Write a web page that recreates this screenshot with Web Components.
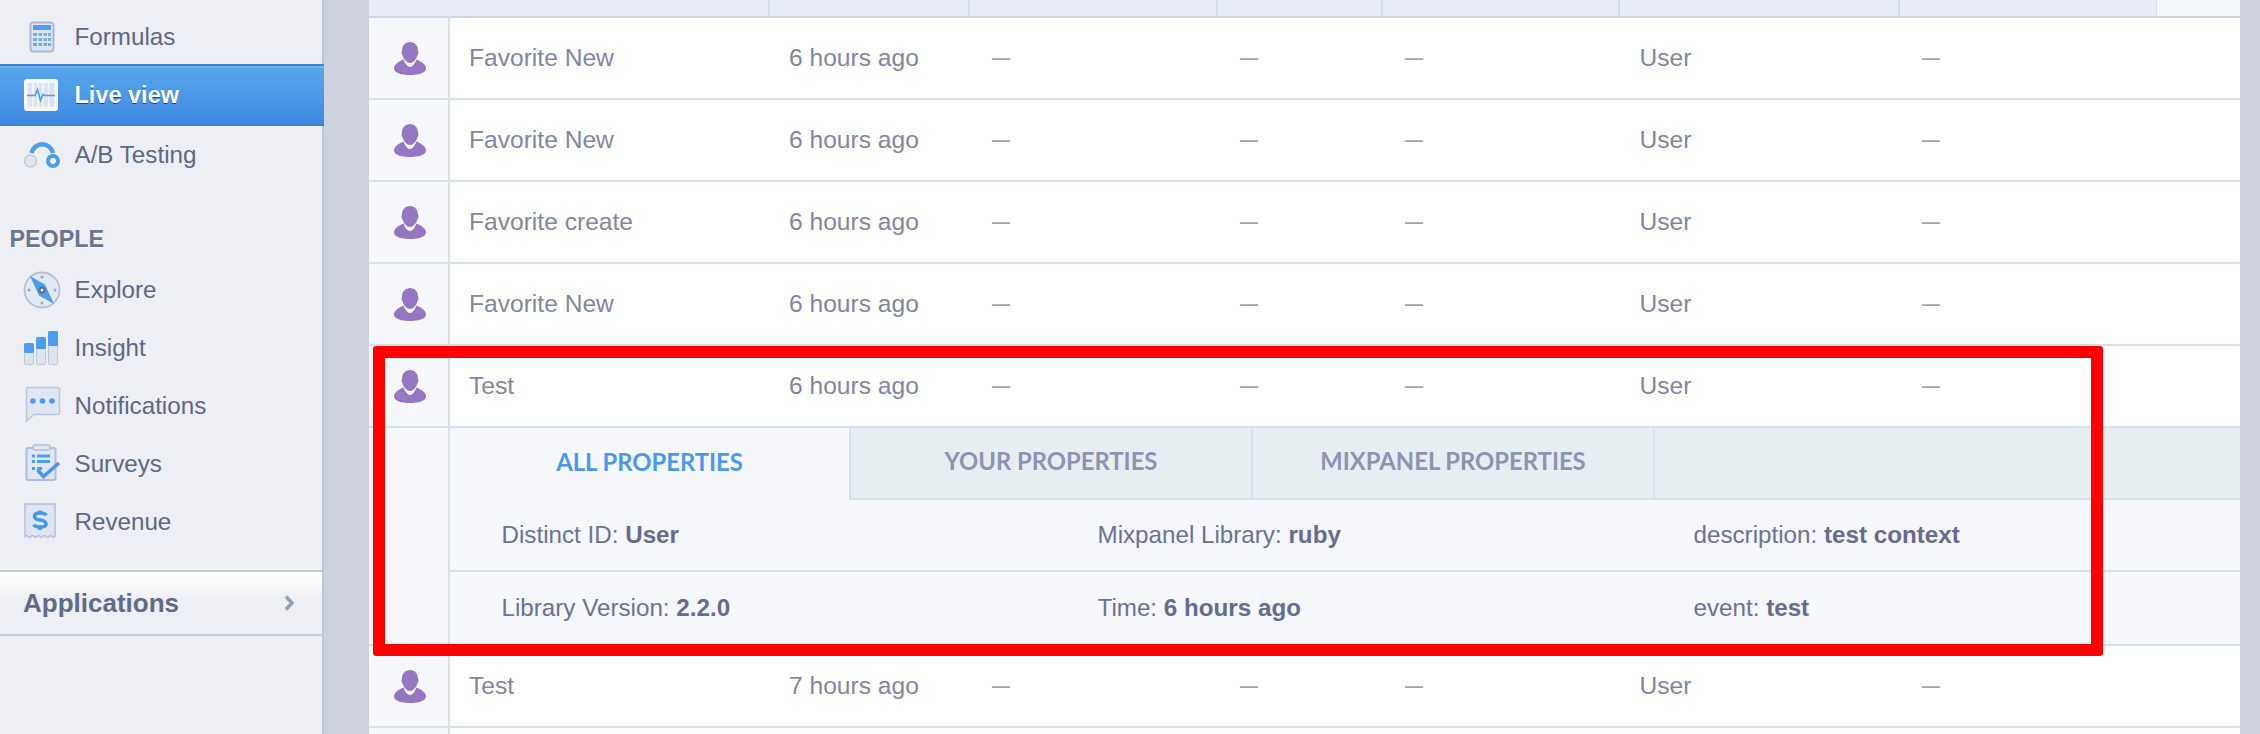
<!DOCTYPE html>
<html>
<head>
<meta charset="utf-8">
<title>Live view</title>
<style>
  html, body { margin: 0; height: 734px; overflow: hidden; background: #cdd2de; }
  body {
    font-family: "Liberation Sans", Arial, sans-serif;
    --cols: 81px 319px 200px 248px 165px 237px 280px 258px 83px;
  }
</style>
</head>
<body>
<app-shell>
  <side-nav slot="nav">
    <nav-item icon="formulas" first>Formulas</nav-item>
    <nav-item icon="live" active>Live view</nav-item>
    <nav-item icon="ab">A/B Testing</nav-item>
    <nav-heading>PEOPLE</nav-heading>
    <nav-item icon="explore">Explore</nav-item>
    <nav-item icon="insight">Insight</nav-item>
    <nav-item icon="notifications">Notifications</nav-item>
    <nav-item icon="surveys">Surveys</nav-item>
    <nav-item icon="revenue">Revenue</nav-item>
    <nav-section>Applications</nav-section>
  </side-nav>

  <event-table>
    <table-head></table-head>
    <event-row name="Favorite New" time="6 hours ago" type="User"></event-row>
    <event-row name="Favorite New" time="6 hours ago" type="User"></event-row>
    <event-row name="Favorite create" time="6 hours ago" type="User"></event-row>
    <event-row name="Favorite New" time="6 hours ago" type="User"></event-row>
    <event-row name="Test" time="6 hours ago" type="User"></event-row>
    <event-props>
      <prop-tab slot="tabs" active>ALL PROPERTIES</prop-tab>
      <prop-tab slot="tabs">YOUR PROPERTIES</prop-tab>
      <prop-tab slot="tabs">MIXPANEL PROPERTIES</prop-tab>
      <prop-item label="Distinct ID">User</prop-item>
      <prop-item label="Mixpanel Library">ruby</prop-item>
      <prop-item label="description">test context</prop-item>
      <prop-item label="Library Version" last>2.2.0</prop-item>
      <prop-item label="Time" last>6 hours ago</prop-item>
      <prop-item label="event" last>test</prop-item>
    </event-props>
    <event-row name="Test" time="7 hours ago" type="User"></event-row>
    <event-row stub></event-row>
    <red-highlight></red-highlight>
  </event-table>
</app-shell>

<script>
const ICONS = {
  formulas: `
    <rect x="8.5" y="5.5" width="23" height="29" rx="3" fill="#dde5f2" stroke="#adb9d2" stroke-width="2"/>
    <rect x="11" y="8" width="18" height="5" fill="#4d9cee"/>
    <g fill="#6fadee">
      <rect x="11" y="16" width="4" height="3"/><rect x="16.5" y="16" width="3.5" height="3"/><rect x="21.5" y="16" width="3.5" height="3"/><rect x="26" y="16" width="3" height="3"/>
      <rect x="11" y="21" width="4" height="3"/><rect x="16.5" y="21" width="3.5" height="3"/><rect x="21.5" y="21" width="3.5" height="3"/><rect x="26" y="21" width="3" height="3"/>
      <rect x="11" y="26" width="4" height="3"/><rect x="16.5" y="26" width="3.5" height="3"/><rect x="21.5" y="26" width="3.5" height="3"/><rect x="26" y="26" width="3" height="3"/>
    </g>`,
  live: `
    <rect x="2" y="3" width="34" height="32" rx="3" fill="#f6f8fc"/>
    <rect x="5.500" y="7" width="27" height="24" fill="#dbe3ee"/>
    <path d="M11 7v24M16 7v24M21 7v24M26.500 7v24" stroke="#f6f8fc" stroke-width="1.500"/>
    <path d="M5 19.500h8l2.500-6 3 11 2.500-6 1.500 1H33" fill="none" stroke="#4d9cee" stroke-width="1.600"/>`,
  ab: `
    <path d="M9.500 18A11 11 0 0 1 31 18" fill="none" stroke="#4d9cee" stroke-width="4.500"/>
    <circle cx="8.500" cy="26" r="6" fill="#e2e5eb" stroke="#c3cad7" stroke-width="1.500"/>
    <circle cx="31" cy="26" r="5" fill="#f1f5fa" stroke="#4d9cee" stroke-width="4"/>`,
  explore: `
    <circle cx="20" cy="20" r="17.500" fill="#e3e9f3" stroke="#b5c1d9" stroke-width="1.800"/>
    <g fill="#9aa8c0"><circle cx="20" cy="7" r="1.500"/><circle cx="20" cy="33" r="1.500"/><circle cx="7" cy="20" r="1.500"/><circle cx="33" cy="20" r="1.500"/></g>
    <path d="M8 6l15 8.500L32 34 17 25.500z" fill="#4d9cee"/>
    <circle cx="20" cy="20" r="3.500" fill="#5c6c8c"/><circle cx="20" cy="20" r="1.500" fill="#dfe6f2"/>`,
  insight: `
    <g fill="#dfe5ef" stroke="#bcc7da" stroke-width="1">
      <rect x="2.500" y="15.500" width="9" height="21" rx="1.500"/><rect x="14.500" y="9.500" width="9" height="27" rx="1.500"/><rect x="26.500" y="3.500" width="9" height="33" rx="1.500"/>
    </g>
    <g fill="#4d9cee"><rect x="2" y="15" width="10" height="10" rx="1.500"/><rect x="14" y="9" width="10" height="12" rx="1.500"/><rect x="26" y="3" width="10" height="15" rx="1.500"/></g>`,
  notifications: `
    <path d="M6.500 1.500h29a2 2 0 0 1 2 2v23a2 2 0 0 1-2 2H12L4.500 35V3.500a2 2 0 0 1 2-2z" fill="#e1e7f2" stroke="#bcc7da" stroke-width="1.500"/>
    <g fill="#4d9cee"><circle cx="11" cy="15" r="2.800"/><circle cx="20.500" cy="15" r="2.800"/><circle cx="30" cy="15" r="2.800"/></g>`,
  surveys: `
    <rect x="4.500" y="4" width="29" height="32" rx="2" fill="#e1e7f2" stroke="#b2bed6" stroke-width="2"/>
    <rect x="11" y="1" width="17" height="5" rx="2" fill="#e1e7f2" stroke="#b2bed6" stroke-width="1.500"/>
    <g fill="#4d9cee">
      <rect x="10" y="10.500" width="3" height="3"/><rect x="15" y="10.500" width="13" height="3"/>
      <rect x="10" y="16" width="3" height="3"/><rect x="15" y="16" width="13" height="3"/>
      <rect x="10" y="23" width="3" height="3"/><rect x="15" y="23" width="5" height="3"/>
    </g>
    <path d="M15.500 26l6 6.500L37 19" fill="none" stroke="#4398ea" stroke-width="3.500"/>`,
  revenue: `
    <path d="M3 2h30v32.500q-1.500 2-3 0t-3 0-3 0-3 0-3 0-3 0-3 0-3 0-3 0-3 0z" fill="#dfe6f2" stroke="#b5c1d9" stroke-width="1.500"/>
    <path d="M24 13.500q-.8-2.500-6-2.500-5.500 0-5.500 3.200t5.500 3.800 6 3.800-6 3.200q-5.200 0-6-2.500M18 8.500v3M18 25v3" fill="none" stroke="#4398ea" stroke-width="3.500"/>`
};

class AppShell extends HTMLElement {
  constructor() {
    super();
    this.attachShadow({ mode: "open" });
    this.shadowRoot.innerHTML = `
      <style>
        :host { display: flex; height: 734px; overflow: hidden; background: #cdd2de; }
        .main { flex: 1; min-width: 0; padding: 0 20px 0 45px; }
      </style>
      <slot name="nav"></slot>
      <div class="main"><slot></slot></div>
    `;
  }
}

class SideNav extends HTMLElement {
  constructor() {
    super();
    this.attachShadow({ mode: "open" });
    this.shadowRoot.innerHTML = `
      <style>
        :host {
          display: block;
          box-sizing: border-box;
          flex: 0 0 324px;
          background: #edeff4;
          border-right: 2px solid #b9c8d8;
        }
      </style>
      <slot></slot>
    `;
  }
}

class NavItem extends HTMLElement {
  constructor() {
    super();
    this.attachShadow({ mode: "open" });
    this.shadowRoot.innerHTML = `
      <style>
        :host {
          display: flex;
          align-items: center;
          box-sizing: border-box;
          height: 58px;
          padding-left: 22px;
          color: #5e6882;
          font-size: 24.2px;
        }
        :host([first]) { height: 64px; padding-top: 10px; }
        :host([active]) {
          height: 62px;
          margin-right: -2px;
          padding-top: 1px;
          position: relative;
          color: #fff;
          font-size: 23.5px;
          font-weight: bold;
          text-shadow: 0 1px 0 #1746b8;
          background: linear-gradient(#59a7eb, #3f88e0);
          border-top: 2px solid #3b84d8;
          border-bottom: 2px solid #3a7fd4;
          box-shadow: inset 0 2px 0 #74b4ef;
        }
        svg { width: 40px; height: 40px; margin-right: 12.500px; flex: none; filter: blur(.4px); }
      </style>
      <svg viewBox="0 0 40 40">${ICONS[this.getAttribute("icon")] || ""}</svg>
      <slot></slot>
    `;
  }
}

class NavHeading extends HTMLElement {
  constructor() {
    super();
    this.attachShadow({ mode: "open" });
    this.shadowRoot.innerHTML = `
      <style>
        :host {
          display: flex;
          align-items: flex-end;
          box-sizing: border-box;
          height: 77px;
          padding: 0 0 8.500px 9.500px;
          color: #6b7490;
          font-size: 23.3px;
          font-weight: bold;
          text-shadow: 0 1px 0 #fff;
        }
      </style>
      <slot></slot>
    `;
  }
}

class NavSection extends HTMLElement {
  constructor() {
    super();
    this.attachShadow({ mode: "open" });
    this.shadowRoot.innerHTML = `
      <style>
        :host {
          display: flex;
          align-items: center;
          justify-content: space-between;
          box-sizing: border-box;
          height: 66px;
          margin-top: 19px;
          padding: 0 28px 0 23px;
          color: #626b85;
          font-size: 26px;
          font-weight: bold;
          background: linear-gradient(#fff 0, #fafbfc 13px, #edeff4 26px);
          border-top: 2px solid #bcd0de;
          border-bottom: 2px solid #bcd0de;
        }
        svg { width: 10px; height: 16px; }
      </style>
      <slot></slot>
      <svg viewBox="0 0 10 16"><path d="M2 1.500L8 8l-6 6.500" fill="none" stroke="#8fa3b5" stroke-width="3.500"/></svg>
    `;
  }
}

class EventTable extends HTMLElement {
  constructor() {
    super();
    this.attachShadow({ mode: "open" });
    this.shadowRoot.innerHTML = `
      <style>
        :host { display: block; position: relative; background: #fff; height: 734px; }
      </style>
      <slot></slot>
    `;
  }
}

class TableHead extends HTMLElement {
  constructor() {
    super();
    this.attachShadow({ mode: "open" });
    this.shadowRoot.innerHTML = `
      <style>
        :host {
          display: grid;
          grid-template-columns: var(--cols);
          height: 18px;
          box-sizing: border-box;
          background: #e8ecf7;
          border-bottom: 2px solid #ccd5e5;
        }
        div { border-right: 2px solid #d3dfea; margin-right: -1px; }
        div:last-child { border: 0; margin: 0; background: #f3f6fb; }
        .first { border: 0; }
      </style>
      <div class="first"></div><div></div><div></div><div></div><div></div><div></div><div></div><div></div><div></div>
    `;
  }
}

class PersonIcon extends HTMLElement {
  constructor() {
    super();
    this.attachShadow({ mode: "open" });
    this.shadowRoot.innerHTML = `
      <style>
        :host { display: block; width: 32px; height: 33px; }
        svg { display: block; }
      </style>
      <svg width="32" height="33" viewBox="0 0 32 33" fill="#9576c2">
        <path d="M16 0c4.500 0 8 3.500 8 8.500 0 1 .6 1.500.4 3-.2 1.300-.9 1.500-1.200 2.500-1 3.500-4.200 7-7.200 7S9.800 17.500 8.800 14c-.3-1-1-1.200-1.200-2.500-.2-1.500.4-2 .4-3C8 3.500 11.500 0 16 0z"/>
        <path d="M0 26.500c0-3.500 3.500-6.500 9.500-9 1.500 4 4 7.500 6.500 7.500s5-3.500 6.500-7.500c6 2.500 9.500 5.500 9.500 9C32 31 24 33 16 33S0 31 0 26.500z"/>
      </svg>
    `;
  }
}

class EventRow extends HTMLElement {
  constructor() {
    super();
    this.attachShadow({ mode: "open" });
    const name = this.getAttribute("name") || "";
    const time = this.getAttribute("time") || "";
    const type = this.getAttribute("type") || "";
    this.shadowRoot.innerHTML = `
      <style>
        :host {
          display: grid;
          grid-template-columns: var(--cols);
          box-sizing: border-box;
          height: 82px;
          color: #7f87a3;
          font-size: 24.6px;
          border-bottom: 2px solid #d6e2eb;
        }
        :host([stub]) { height: 6px; border: 0; }
        :host([stub]) .cell > * { display: none; }
        .cell { display: flex; align-items: center; padding-left: 20px; min-width: 0; white-space: nowrap; }
        .name { padding-left: 19px; }
        .who {
          padding: 0 0 0 3px;
          justify-content: center;
          box-sizing: border-box;
          background: #f5f7fb;
          border-right: 2px solid #d6e2eb;
        }
        .dash { padding-left: 23px; }
        .dash span { color: #a3a3a3; font-size: 18px; font-weight: bold; }
        .type { padding-left: 20.500px; }
      </style>
      <div class="cell who"><person-icon></person-icon></div>
      <div class="cell name"><span>${name}</span></div>
      <div class="cell"><span>${time}</span></div>
      <div class="cell dash"><span>—</span></div>
      <div class="cell dash"><span>—</span></div>
      <div class="cell dash"><span>—</span></div>
      <div class="cell type"><span>${type}</span></div>
      <div class="cell dash"><span>—</span></div>
      <div class="cell"></div>
    `;
  }
}

class EventProps extends HTMLElement {
  constructor() {
    super();
    this.attachShadow({ mode: "open" });
    this.shadowRoot.innerHTML = `
      <style>
        :host {
          display: grid;
          grid-template-columns: 81px 1fr;
          box-sizing: border-box;
          height: 218px;
          background: #f5f7fb;
          border-bottom: 2px solid #d6e2eb;
        }
        .gap { border-right: 2px solid #d6e2eb; }
        .tabs { display: flex; height: 72px; background: #e7eef2; }
        .tabs::after { content: ""; flex: 1; border-bottom: 2px solid #d6e2eb; }
        .grid { display: grid; grid-template-columns: 596px 596px 1fr; grid-auto-rows: 72px; }
      </style>
      <div class="gap"></div>
      <div>
        <div class="tabs"><slot name="tabs"></slot></div>
        <div class="grid"><slot></slot></div>
      </div>
    `;
  }
}

class PropTab extends HTMLElement {
  constructor() {
    super();
    this.attachShadow({ mode: "open" });
    this.shadowRoot.innerHTML = `
      <style>
        :host {
          display: flex;
          align-items: center;
          justify-content: center;
          box-sizing: border-box;
          flex: 0 0 402px;
          padding-bottom: 4px;
          color: #8d93b1;
          font-family: Lato, "Liberation Sans", sans-serif;
          font-size: 23.800px;
          font-weight: 700;
          background: #e7eef2;
          border-right: 2px solid #d6e2eb;
          border-bottom: 2px solid #d6e2eb;
        }
        :host([active]) {
          flex-basis: 401px;
          color: #4a98ee;
          background: #f5f7fb;
          border-bottom: 0;
        }
      </style>
      <slot></slot>
    `;
  }
}

class PropItem extends HTMLElement {
  constructor() {
    super();
    this.attachShadow({ mode: "open" });
    this.shadowRoot.innerHTML = `
      <style>
        :host {
          display: flex;
          align-items: center;
          box-sizing: border-box;
          padding-left: 51.500px;
          color: #6b7392;
          font-size: 24.200px;
          white-space: nowrap;
          border-bottom: 2px solid #d6e2eb;
        }
        :host([last]) { border-bottom: 0; }
        b { color: #666c8e; margin-left: .28em; }
      </style>
      <span>${this.getAttribute("label")}:</span><b><slot></slot></b>
    `;
  }
}

// the red annotation drawn over the screenshot
class RedHighlight extends HTMLElement {
  constructor() {
    super();
    this.attachShadow({ mode: "open" });
    this.shadowRoot.innerHTML = `
      <style>
        :host {
          position: absolute;
          left: 4px;
          top: 346px;
          width: 1730px;
          height: 310px;
          box-sizing: border-box;
          border: 12px solid #fe0000;
          border-radius: 3px;
          pointer-events: none;
        }
      </style>
    `;
  }
}

customElements.define("app-shell", AppShell);
customElements.define("side-nav", SideNav);
customElements.define("nav-item", NavItem);
customElements.define("nav-heading", NavHeading);
customElements.define("nav-section", NavSection);
customElements.define("event-table", EventTable);
customElements.define("table-head", TableHead);
customElements.define("person-icon", PersonIcon);
customElements.define("event-row", EventRow);
customElements.define("event-props", EventProps);
customElements.define("prop-tab", PropTab);
customElements.define("prop-item", PropItem);
customElements.define("red-highlight", RedHighlight);
</script>
</body>
</html>
